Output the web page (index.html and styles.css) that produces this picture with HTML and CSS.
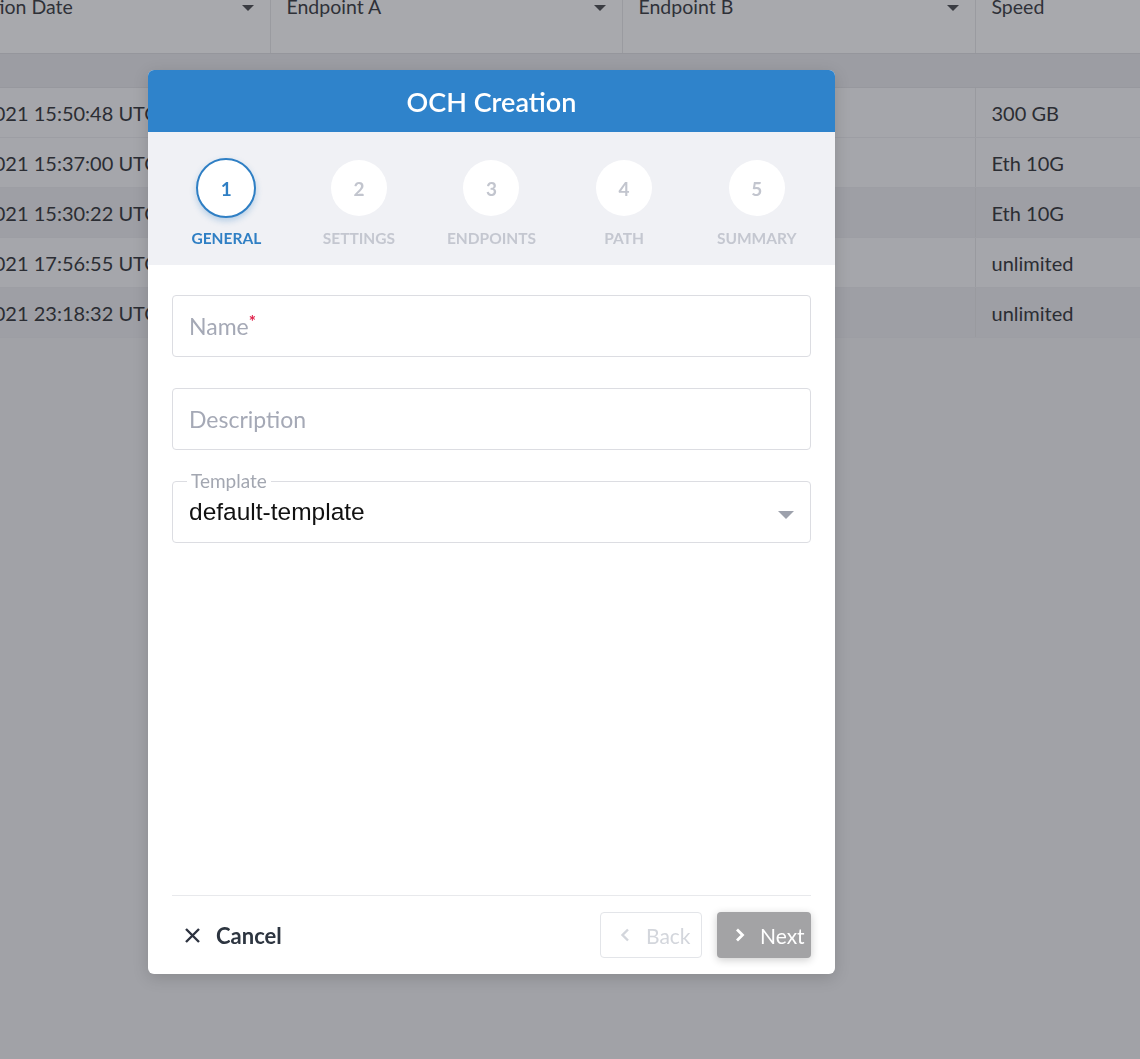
FILE: index.html
```html
<!DOCTYPE html>
<html lang="en">
<head>
    <meta charset="UTF-8">
    <meta name="viewport" content="width=device-width, initial-scale=1.0">
    <title>OCH Creation</title>
    <link rel="stylesheet" href="styles.css">
</head>
<body>
    <table class="grid">
        <colgroup>
            <col class="col-date">
            <col class="col-a">
            <col class="col-b">
            <col class="col-speed">
        </colgroup>
        <thead>
            <tr class="head-row">
                <th><span>Creation Date</span><i class="sort"></i></th>
                <th><span>Endpoint A</span><i class="sort"></i></th>
                <th><span>Endpoint B</span><i class="sort"></i></th>
                <th><span>Speed</span><i class="sort"></i></th>
            </tr>
            <tr class="filter-row">
                <td></td><td></td><td></td><td></td>
            </tr>
        </thead>
        <tbody>
            <tr class="light">
                <td>Jul 2021 15:50:48 UTC</td><td></td><td></td><td>300 GB</td>
            </tr>
            <tr class="light">
                <td>Jul 2021 15:37:00 UTC</td><td></td><td></td><td>Eth 10G</td>
            </tr>
            <tr class="dark">
                <td>Jul 2021 15:30:22 UTC</td><td></td><td></td><td>Eth 10G</td>
            </tr>
            <tr class="light">
                <td>Jul 2021 17:56:55 UTC</td><td></td><td></td><td>unlimited</td>
            </tr>
            <tr class="dark">
                <td>Jul 2021 23:18:32 UTC</td><td></td><td></td><td>unlimited</td>
            </tr>
        </tbody>
    </table>

    <div class="overlay">
        <div class="modal">
            <div class="modal-header">OCH Creation</div>

            <div class="stepper">
                <div class="step active">
                    <div class="step-circle">1</div>
                    <div class="step-label">General</div>
                </div>
                <div class="step">
                    <div class="step-circle">2</div>
                    <div class="step-label">Settings</div>
                </div>
                <div class="step">
                    <div class="step-circle">3</div>
                    <div class="step-label">Endpoints</div>
                </div>
                <div class="step">
                    <div class="step-circle">4</div>
                    <div class="step-label">Path</div>
                </div>
                <div class="step">
                    <div class="step-circle">5</div>
                    <div class="step-label">Summary</div>
                </div>
            </div>

            <div class="modal-body">
                <div class="field">
                    <span class="placeholder">Name<sup class="req">*</sup></span>
                </div>
                <div class="field">
                    <span class="placeholder">Description</span>
                </div>
                <fieldset class="select-field">
                    <legend>Template</legend>
                    <div class="select-value">
                        <span>default-template</span>
                        <i class="caret"></i>
                    </div>
                </fieldset>
            </div>

            <div class="modal-footer">
                <button class="btn-cancel">
                    <svg width="17" height="17" viewBox="0 0 17 17"><path d="M2 2 L15 15 M15 2 L2 15" stroke="#2d3340" stroke-width="2.4" fill="none"/></svg>
                    Cancel
                </button>
                <div class="nav-buttons">
                    <button class="btn btn-back">
                        <svg width="10" height="16" viewBox="0 0 10 16"><polyline points="8,2.5 2.5,8 8,13.5" stroke="#d3d6dc" stroke-width="2.4" fill="none"/></svg>
                        Back
                    </button>
                    <button class="btn btn-next">
                        <svg width="10" height="16" viewBox="0 0 10 16"><polyline points="2,2.5 7.5,8 2,13.5" stroke="#fff" stroke-width="2.8" fill="none"/></svg>
                        Next
                    </button>
                </div>
            </div>
        </div>
    </div>
</body>
</html>
```

FILE: styles.css
```css
body {
    margin: 0;
    background-color: #a1a2a7;
    font-family: Lato, "Open Sans", sans-serif;
    overflow: hidden;
    height: 1059px;
}

/* background grid (dimmed behind the modal) */
.grid {
    border-collapse: collapse;
    table-layout: fixed;
    width: 1258px;
    margin-left: -63px;
    margin-top: -5px;
    color: #2b2d33;
    font-size: 20px;
}

.col-date { width: 333px; }
.col-a { width: 352px; }
.col-b { width: 353px; }
.col-speed { width: 220px; }

.head-row th {
    height: 58px;
    background-color: #a8a9ad;
    border-right: 1px solid #9a9ba0;
    border-bottom: 1px solid #95969c;
    text-align: left;
    vertical-align: top;
    font-size: 19.5px;
    font-weight: 400;
    line-height: 24px;
    padding: 0 16px;
    position: relative;
    color: #2f3138;
}

.sort {
    position: absolute;
    right: 16px;
    top: 10px;
    border-left: 6px solid transparent;
    border-right: 6px solid transparent;
    border-top: 6px solid #3a3c42;
}

.filter-row td {
    height: 31px;
    background-color: #9c9da3;
    border-bottom: 1px solid #97989e;
}

tbody td {
    height: 49px;
    padding: 0 16px;
    border-bottom: 1px solid #9d9ea4;
    border-right: 1px solid #999a9f;
    white-space: nowrap;
    overflow: hidden;
}

tr.light td { background-color: #a5a6ab; }
tr.dark td { background-color: #9e9fa5; }

/* modal */
.overlay {
    position: fixed;
    inset: 0;
    padding: 70px 0 0 148px;
}

.modal {
    width: 687px;
    height: 904px;
    background-color: #fff;
    border-radius: 6px;
    overflow: hidden;
    display: flex;
    flex-direction: column;
    box-shadow: 0 4px 16px rgba(0, 0, 0, 0.15);
}

.modal-header {
    height: 62px;
    background-color: #2f83cb;
    color: #fff;
    font-size: 27px;
    font-weight: 600;
    display: flex;
    align-items: center;
    justify-content: center;
}

.stepper {
    height: 133px;
    background-color: #f0f1f5;
    display: flex;
    padding: 0 12px;
}

.step {
    flex: 1;
    display: flex;
    flex-direction: column;
    align-items: center;
    padding-top: 28px;
}

.step-circle {
    width: 56px;
    height: 56px;
    border-radius: 50%;
    background-color: #fff;
    color: #c2c5ce;
    font-size: 19px;
    font-weight: 700;
    display: flex;
    align-items: center;
    justify-content: center;
    box-sizing: border-box;
}

.step-label {
    margin-top: 13px;
    font-size: 15.5px;
    font-weight: 700;
    text-transform: uppercase;
    color: #c4c7d0;
}

.step.active .step-circle {
    width: 60px;
    height: 60px;
    margin-top: -2px;
    border: 2px solid #2f7fc4;
    color: #2f7fc4;
    box-shadow: 0 3px 6px rgba(47, 127, 196, 0.3);
}

.step.active .step-label {
    margin-top: 11px;
    color: #2f7fc4;
}

.modal-body {
    flex: 1;
    padding: 30px 24px 0;
    display: flex;
    flex-direction: column;
    gap: 31px;
}

.field {
    height: 62px;
    box-sizing: border-box;
    border: 1px solid #dcdde2;
    border-radius: 4px;
    padding: 0 16px;
    display: flex;
    align-items: center;
}

.placeholder {
    font-size: 23px;
    color: #a5a9b6;
}

.req {
    color: #e0204a;
    font-size: 17px;
    font-weight: 700;
    line-height: 1;
    vertical-align: top;
    position: relative;
    top: 1px;
}

.select-field {
    margin: -10px 0 0;
    padding: 0 16px;
    border: 1px solid #dcdde2;
    border-radius: 4px;
}

.select-field legend {
    font-size: 19px;
    line-height: 20px;
    color: #a3a7b1;
    padding: 0 4px;
    margin-left: -2px;
}

.select-value {
    height: 51px;
    box-sizing: border-box;
    display: flex;
    align-items: center;
    justify-content: space-between;
    font-family: "Liberation Sans", Arial, sans-serif;
    font-size: 24.5px;
    color: #111;
    padding-bottom: 10px;
}

.caret {
    border-left: 8px solid transparent;
    border-right: 8px solid transparent;
    border-top: 8px solid #9da1ac;
    margin-top: 6px;
}

.modal-footer {
    margin: 0 24px;
    border-top: 1px solid #e8e9ec;
    padding: 16px 0 16px;
    display: flex;
    align-items: center;
    justify-content: space-between;
}

.btn-cancel {
    background: none;
    border: none;
    font-family: inherit;
    font-size: 22px;
    font-weight: 700;
    color: #2d3540;
    display: flex;
    align-items: center;
    gap: 15px;
    padding: 0 0 0 12px;
}

.nav-buttons {
    display: flex;
    gap: 15px;
}

.btn {
    height: 46px;
    box-sizing: border-box;
    border-radius: 4px;
    font-family: inherit;
    font-size: 21px;
    display: flex;
    align-items: center;
    padding: 0;
}

.btn svg {
    flex-shrink: 0;
}

.btn-back {
    width: 102px;
    background-color: #fff;
    border: 1px solid #e3e5e9;
    color: #d3d6dc;
    padding-left: 19px;
    gap: 16px;
}

.btn-next {
    width: 94px;
    background-color: #a3a3a5;
    border: none;
    color: #fff;
    padding-left: 18px;
    gap: 15px;
    box-shadow: 0 2px 8px rgba(0, 0, 0, 0.2);
}
```
